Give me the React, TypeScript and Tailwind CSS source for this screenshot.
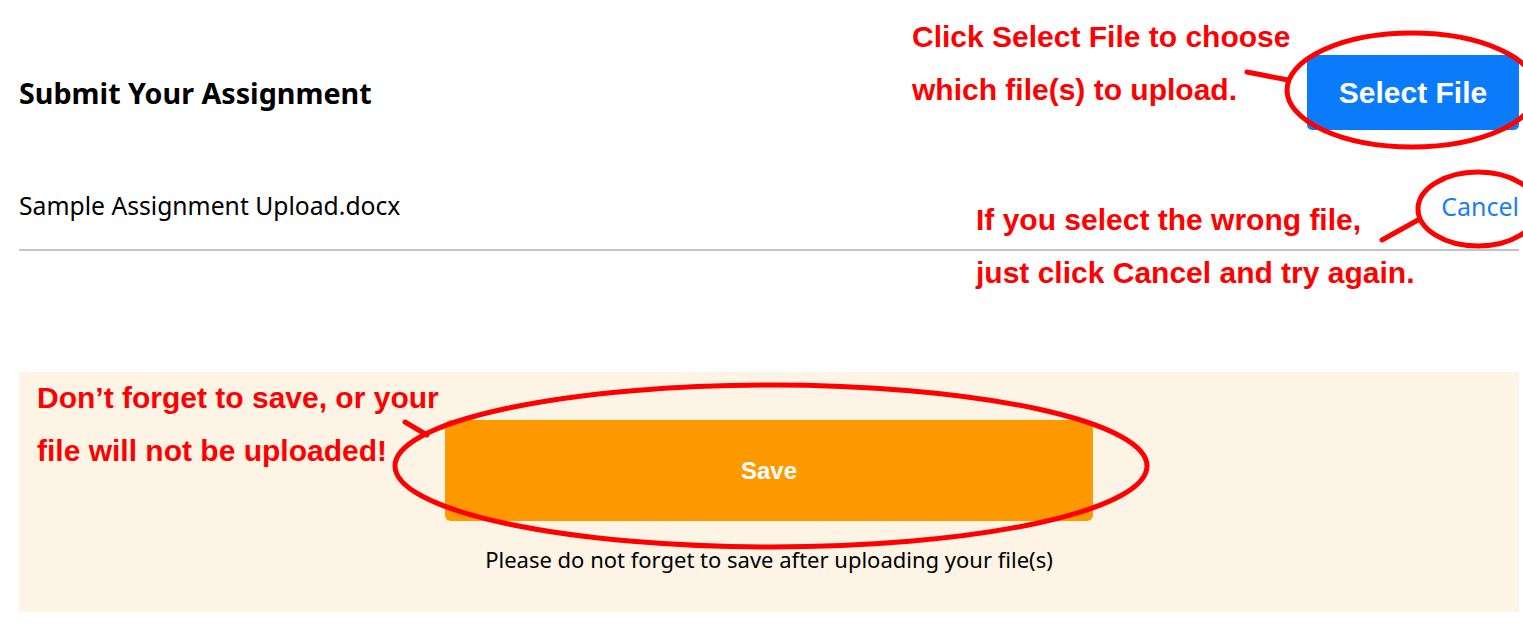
import React from 'react';

const ui = { fontFamily: '"Noto Sans", "DejaVu Sans", sans-serif' };
const note = { fontFamily: '"Liberation Sans", Arial, sans-serif' };

const Annotations = () => (
  <>
    <svg
      className="pointer-events-none absolute left-0 top-0"
      width="1523"
      height="635"
      viewBox="0 0 1523 635"
      fill="none"
      stroke="#ff0000"
      strokeWidth="5"
      strokeLinecap="round"
    >
      <ellipse cx="1412" cy="90" rx="125" ry="57" />
      <line x1="1247" y1="72" x2="1288" y2="80" />
      <ellipse cx="1478" cy="209" rx="60" ry="37" />
      <line x1="1382" y1="240" x2="1418" y2="220" />
      <ellipse cx="771" cy="466" rx="376" ry="81" />
      <line x1="405" y1="422" x2="427" y2="435" />
    </svg>
    <div
      className="pointer-events-none absolute left-[912px] top-[10px] text-[30px] font-bold leading-[53px] text-[#ff0000]"
      style={note}
    >
      <div>Click Select File to choose</div>
      <div>which file(s) to upload.</div>
    </div>
    <div
      className="pointer-events-none absolute left-[976px] top-[193px] text-[30px] font-bold leading-[53px] text-[#ff0000]"
      style={note}
    >
      <div>If you select the wrong file,</div>
      <div>just click Cancel and try again.</div>
    </div>
    <div
      className="pointer-events-none absolute left-[37px] top-[371px] text-[30px] font-bold leading-[53px] text-[#ff0000]"
      style={note}
    >
      <div>Don’t forget to save, or your</div>
      <div>file will not be uploaded!</div>
    </div>
  </>
);

export default function App() {
  return (
    <div className="relative h-[635px] w-[1523px] overflow-hidden bg-white text-black" style={ui}>
      <div className="ml-[19px] w-[1500px]">
        <div className="flex items-center justify-between pt-[55px]">
          <h2 className="text-[28.7px] font-bold leading-[38px]">Submit Your Assignment</h2>
          <button
            className="h-[75px] w-[212px] rounded-[5px] bg-[#0a7cfb] text-[30px] font-bold text-white"
            style={note}
          >
            Select File
          </button>
        </div>

        <div className="mt-[59px] flex items-center justify-between border-b-2 border-[#c4c4c4] pb-[26px]">
          <span className="text-[24.7px] leading-[34px]">Sample Assignment Upload.docx</span>
          <span className="text-[25px] leading-[34px] text-[#1a7ff5]">Cancel</span>
        </div>

        <div className="mt-[121px] flex h-[240px] flex-col items-center bg-[#fef4e6] pt-[48px]">
          <button
            className="h-[101px] w-[648px] rounded-[6px] bg-[#ff9900] text-[24px] font-bold text-white"
            style={{ fontFamily: '"Liberation Sans Narrow", "Liberation Sans", Arial, sans-serif' }}
          >
            Save
          </button>
          <p className="mt-[24px] text-[22px] leading-[28px]">
            Please do not forget to save after uploading your file(s)
          </p>
        </div>
      </div>
      <Annotations />
    </div>
  );
}
